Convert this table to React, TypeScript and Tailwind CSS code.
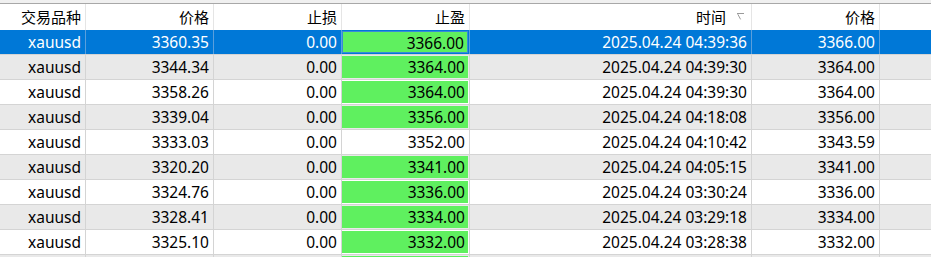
import React from 'react';

type Row = {
    symbol: string;
    price: string;
    sl: string;
    tp: string;
    time: string;
    close: string;
    hit: boolean;
};

const rows: Row[] = [
    { symbol: 'xauusd', price: '3360.35', sl: '0.00', tp: '3366.00', time: '2025.04.24 04:39:36', close: '3366.00', hit: true },
    { symbol: 'xauusd', price: '3344.34', sl: '0.00', tp: '3364.00', time: '2025.04.24 04:39:30', close: '3364.00', hit: true },
    { symbol: 'xauusd', price: '3358.26', sl: '0.00', tp: '3364.00', time: '2025.04.24 04:39:30', close: '3364.00', hit: true },
    { symbol: 'xauusd', price: '3339.04', sl: '0.00', tp: '3356.00', time: '2025.04.24 04:18:08', close: '3356.00', hit: true },
    { symbol: 'xauusd', price: '3333.03', sl: '0.00', tp: '3352.00', time: '2025.04.24 04:10:42', close: '3343.59', hit: false },
    { symbol: 'xauusd', price: '3320.20', sl: '0.00', tp: '3341.00', time: '2025.04.24 04:05:15', close: '3341.00', hit: true },
    { symbol: 'xauusd', price: '3324.76', sl: '0.00', tp: '3336.00', time: '2025.04.24 03:30:24', close: '3336.00', hit: true },
    { symbol: 'xauusd', price: '3328.41', sl: '0.00', tp: '3334.00', time: '2025.04.24 03:29:18', close: '3334.00', hit: true },
    { symbol: 'xauusd', price: '3325.10', sl: '0.00', tp: '3332.00', time: '2025.04.24 03:28:38', close: '3332.00', hit: true },
    // only a sliver of this row is visible at the bottom edge
    { symbol: '', price: '', sl: '', tp: '', time: '', close: '', hit: true },
];

const grid = 'grid grid-cols-[86px_128px_128px_128px_282px_128px_1fr]';

const SortArrow: React.FC = () => (
    <svg width="8" height="8" viewBox="0 0 8 8" className="absolute right-[6px] top-[9px]">
        <path d="M0 0.5 H7 M0.8 1.2 L3.6 6.4" stroke="#9a9a9a" strokeWidth="1" fill="none" />
    </svg>
);

const App: React.FC = () => {
    return (
        <div
            className="h-[257px] w-[931px] overflow-hidden bg-[#f0f0f0] pt-[3px] text-[15.5px] leading-[24px] text-black"
            style={{ fontFamily: '"Noto Sans", "Noto Sans CJK SC", sans-serif' }}
        >
            {/* Header */}
            <div className={`${grid} h-[27px] border-t border-[#a8a8a8] bg-white text-[15px]`}>
                {['交易品种', '价格', '止损', '止盈'].map((h) => (
                    <div key={h} className="border-r border-[#e5e5e5] pr-[4px] pt-[1px] text-right">{h}</div>
                ))}
                <div className="relative border-r border-[#e5e5e5] pr-[25px] pt-[1px] text-right">
                    时间
                    <SortArrow />
                </div>
                <div className="border-r border-[#e5e5e5] pr-[4px] pt-[1px] text-right">价格</div>
                <div />
            </div>

            {/* Body */}
            {rows.map((r, i) => {
                const selected = i === 0;
                const bg = selected ? 'bg-[#0078d7] text-white' : i % 2 === 1 ? 'bg-[#e9e9e9]' : 'bg-white';
                const line = selected ? 'border-[#5a9fdc]' : 'border-[#d4d4d4]';
                return (
                    <div key={i} className={`${grid} h-[25px] border-b border-[#d4d4d4] ${bg}`}>
                        <div className={`border-r ${line} pr-[4px] text-right`}>{r.symbol}</div>
                        <div className={`border-r ${line} pr-[4px] text-right`}>{r.price}</div>
                        <div className={`border-r ${line} pr-[4px] text-right`}>{r.sl}</div>
                        <div className={`border-r ${line} py-px pr-px`}>
                            {r.hit ? (
                                <div
                                    className={`h-[22px] bg-[#5ff05f] pr-[3px] text-right leading-[22px] text-black ${selected ? 'border border-[#3a8ad6] leading-[20px]' : ''}`}
                                >
                                    {r.tp}
                                </div>
                            ) : (
                                <div className="h-[22px] pr-[3px] text-right leading-[22px]">{r.tp}</div>
                            )}
                        </div>
                        <div className={`border-r ${line} pr-[4px] text-right`}>{r.time}</div>
                        <div className={`border-r ${line} pr-[4px] text-right`}>{r.close}</div>
                        <div />
                    </div>
                );
            })}
        </div>
    );
};

export default App;
